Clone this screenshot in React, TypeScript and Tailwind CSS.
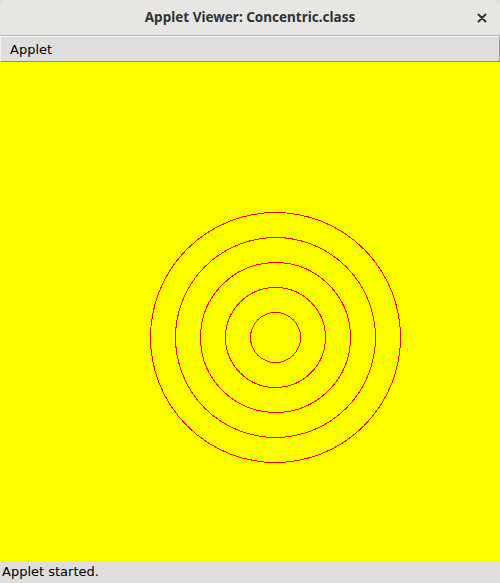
import React from "react";

export default function App() {
  const radii = [125, 100, 75, 50, 25];
  return (
    <div className="w-[500px] h-[583px] flex flex-col overflow-hidden bg-[#dedede]" style={{ fontFamily: '"DejaVu Sans", sans-serif' }}>
      <div className="h-[36px] shrink-0 relative flex items-center justify-center bg-[#e8e6e3] border-b border-[#bfb8b1] rounded-t-[7px]">
        <span className="text-[13.5px] font-bold text-[#2e3436]" style={{ fontFamily: '"Noto Sans", "DejaVu Sans", sans-serif' }}>Applet Viewer: Concentric.class</span>
        <svg className="absolute right-[13px] top-[13px]" width="10" height="10" viewBox="0 0 10 10">
          <path d="M1.5 1.5 L8.5 8.5 M8.5 1.5 L1.5 8.5" stroke="#2e3436" strokeWidth="2" strokeLinecap="round" />
        </svg>
      </div>
      <div className="h-[26px] shrink-0 flex items-center pl-[9px] pt-[1px] bg-[#dedede] border-b border-[#8e8e8e] border-r border-r-[#9a9a9a] border-l border-l-[#f4f4f4] border-t border-t-[#f4f4f4]">
        <span className="text-[13px] text-black">Applet</span>
      </div>
      <div className="h-[499px] shrink-0 bg-[#ffff00] relative">
        <svg width="500" height="499" className="absolute left-0 top-0">
          {radii.map((r) => (
            <circle key={r} cx="275.5" cy="275.5" r={r} fill="none" stroke="#ff0000" strokeWidth="1" shapeRendering="crispEdges" />
          ))}
        </svg>
      </div>
      <div className="flex-1 flex items-center pl-[2px] bg-[#dedede]">
        <span className="text-[13px] text-black">Applet started.</span>
      </div>
    </div>
  );
}
